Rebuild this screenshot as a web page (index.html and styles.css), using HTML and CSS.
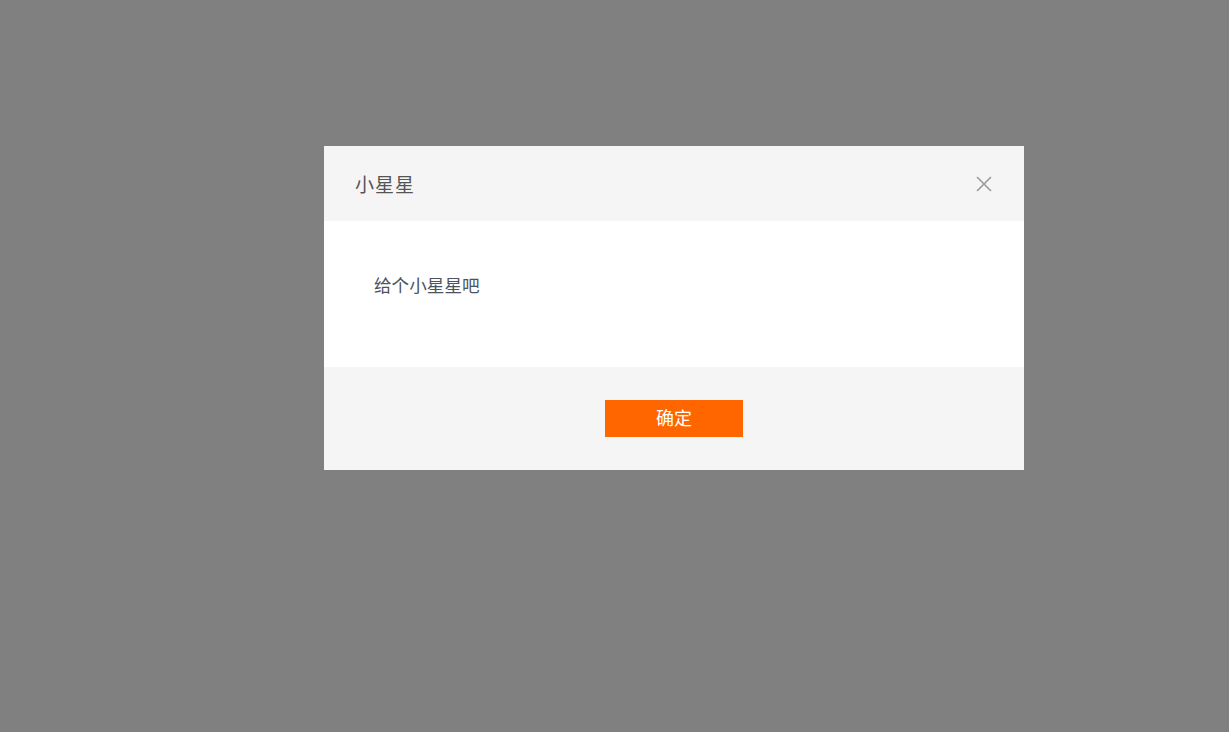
FILE: index.html
```html
<!DOCTYPE html>
<html lang="zh-CN">
<head>
<meta charset="utf-8">
<title>小星星</title>
<link rel="stylesheet" href="styles.css">
</head>
<body>
<div class="overlay">
  <div class="dialog">
    <div class="dialog-header">
      <span class="dialog-title">小星星</span>
      <button class="dialog-close" aria-label="关闭">
        <svg width="16" height="16" viewBox="0 0 16 16"><path d="M1 1L15 15M15 1L1 15" stroke="#999" stroke-width="1.6" fill="none"/></svg>
      </button>
    </div>
    <div class="dialog-body">给个小星星吧</div>
    <div class="dialog-footer">
      <button class="btn-primary">确定</button>
    </div>
  </div>
</div>
</body>
</html>
```

FILE: styles.css
```css
html, body {
  margin: 0;
  padding: 0;
  height: 100%;
}
body {
  background: #808080;
  font-family: "Noto Sans CJK SC", "Noto Sans", sans-serif;
}
.overlay {
  min-height: 100%;
  padding: 146px 0 0 324px;
  box-sizing: border-box;
}
.dialog {
  width: 700px;
  background: #fff;
  display: flex;
  flex-direction: column;
}
.dialog-header {
  height: 75px;
  background: #f5f5f5;
  display: flex;
  align-items: center;
  justify-content: space-between;
  padding: 0 32px 0 31px;
}
.dialog-title {
  font-size: 19px;
  color: #555;
  letter-spacing: 1px;
  line-height: 1;
  padding-bottom: 1px;
}
.dialog-close {
  border: 0;
  background: none;
  padding: 0;
  width: 16px;
  height: 16px;
  display: flex;
  cursor: pointer;
}
.dialog-body {
  height: 146px;
  box-sizing: border-box;
  padding: 54px 0 0 50px;
  font-size: 17.6px;
  line-height: 20px;
  color: #4d5360;
}
.dialog-footer {
  height: 103px;
  background: #f5f5f5;
  display: flex;
  justify-content: center;
  padding-top: 33px;
  box-sizing: border-box;
}
.btn-primary {
  width: 138px;
  height: 37px;
  border: 0;
  background: #ff6600;
  color: #fff;
  font-family: inherit;
  font-size: 18px;
  line-height: 1;
  padding: 0 0 3px;
  cursor: pointer;
}
```
